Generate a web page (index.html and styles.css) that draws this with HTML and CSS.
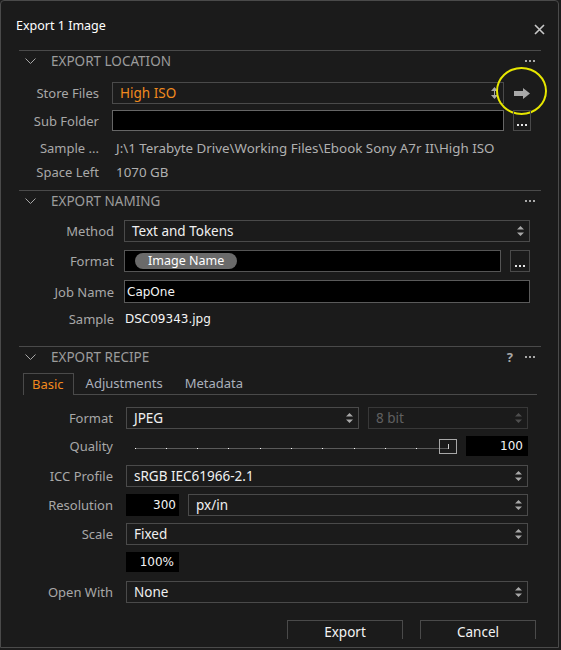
FILE: index.html
```html
<!DOCTYPE html>
<html>
<head>
<meta charset="utf-8">
<link rel="stylesheet" href="styles.css">
</head>
<body>
<div class="window">
  <div class="titlebar">
    <span class="title">Export 1 Image</span>
    <svg class="close" width="11" height="11" viewBox="0 0 11 11"><path d="M1 1L10 10M10 1L1 10"/></svg>
  </div>

  <section class="section sec-loc">
    <div class="sec-head">
      <svg class="chev" width="11" height="6" viewBox="0 0 11 6"><polyline points="0.5,0.5 5.5,5.5 10.5,0.5"/></svg>
      <span class="sec-title">EXPORT LOCATION</span>
      <span class="tools"><svg class="dots" width="10" height="2" viewBox="0 0 10 2"><rect x="0" width="2" height="2"/><rect x="4" width="2" height="2"/><rect x="8" width="2" height="2"/></svg></span>
    </div>
    <div class="row h22 mt11">
      <span class="lbl">Store Files</span>
      <div class="select store"><span class="sel-text orange">High ISO</span>
        <svg class="updown" width="7" height="12" viewBox="0 0 7 12"><path d="M3.5 0L7 4H4V8H7L3.5 12L0 8H3V4H0Z"/></svg>
      </div>
      <div class="side arrow-side">
        <svg class="goarrow" width="16" height="11" viewBox="0 0 16 11"><path d="M0 3H9V0L16 5.5L9 11V8H0Z"/></svg>
        <span class="ring"></span>
      </div>
    </div>
    <div class="row h21 mt6">
      <span class="lbl">Sub Folder</span>
      <div class="input"></div>
      <div class="side"><div class="more"><svg width="10" height="2" viewBox="0 0 10 2"><rect x="0" width="2" height="2"/><rect x="4" width="2" height="2"/><rect x="8" width="2" height="2"/></svg></div></div>
    </div>
    <div class="row h22 mt6">
      <span class="lbl">Sample ...</span>
      <span class="val">J:\1 Terabyte Drive\Working Files\Ebook Sony A7r II\High ISO</span>
    </div>
    <div class="row h22 mt2">
      <span class="lbl">Space Left</span>
      <span class="val">1070 GB</span>
    </div>
  </section>

  <section class="section sec-name">
    <div class="sec-head">
      <svg class="chev" width="11" height="6" viewBox="0 0 11 6"><polyline points="0.5,0.5 5.5,5.5 10.5,0.5"/></svg>
      <span class="sec-title">EXPORT NAMING</span>
      <span class="tools"><svg class="dots" width="10" height="2" viewBox="0 0 10 2"><rect x="0" width="2" height="2"/><rect x="4" width="2" height="2"/><rect x="8" width="2" height="2"/></svg></span>
    </div>
    <div class="row h22 mt9">
      <span class="lbl">Method</span>
      <div class="select"><span class="sel-text">Text and Tokens</span>
        <svg class="updown" width="7" height="12" viewBox="0 0 7 12"><path d="M0 4.5L3.5 1L7 4.5ZM0 7.5L3.5 11L7 7.5Z"/></svg>
      </div>
    </div>
    <div class="row h22 mt8">
      <span class="lbl">Format</span>
      <div class="input tokens"><span class="chip">Image Name</span></div>
      <div class="side2"><div class="more"><svg width="10" height="2" viewBox="0 0 10 2"><rect x="0" width="2" height="2"/><rect x="4" width="2" height="2"/><rect x="8" width="2" height="2"/></svg></div></div>
    </div>
    <div class="row h23 mt8">
      <span class="lbl">Job Name</span>
      <div class="input job"><span class="mono">CapOne</span></div>
    </div>
    <div class="row h22 mt5">
      <span class="lbl">Sample</span>
      <span class="mono sample">DSC09343.jpg</span>
    </div>
  </section>

  <section class="section sec-recipe">
    <div class="sec-head">
      <svg class="chev" width="11" height="6" viewBox="0 0 11 6"><polyline points="0.5,0.5 5.5,5.5 10.5,0.5"/></svg>
      <span class="sec-title">EXPORT RECIPE</span>
      <span class="tools"><span class="help">?</span><svg class="dots" width="10" height="2" viewBox="0 0 10 2"><rect x="0" width="2" height="2"/><rect x="4" width="2" height="2"/><rect x="8" width="2" height="2"/></svg></span>
    </div>
    <div class="tabs mt6">
      <span class="tab active">Basic</span>
      <span class="tab t-adj">Adjustments</span>
      <span class="tab t-meta">Metadata</span>
      <span class="tab-fill"></span>
    </div>
    <div class="row h22 mt12">
      <span class="lbl">Format</span>
      <div class="select"><span class="sel-text">JPEG</span>
        <svg class="updown" width="7" height="12" viewBox="0 0 7 12"><path d="M0 4.5L3.5 1L7 4.5ZM0 7.5L3.5 11L7 7.5Z"/></svg>
      </div>
      <div class="select disabled bits"><span class="sel-text">8 bit</span>
        <svg class="updown" width="7" height="12" viewBox="0 0 7 12"><path d="M0 4.5L3.5 1L7 4.5ZM0 7.5L3.5 11L7 7.5Z"/></svg>
      </div>
    </div>
    <div class="row h20 mt7">
      <span class="lbl">Quality</span>
      <svg class="slider" width="331" height="20" viewBox="0 0 331 20">
        <line class="track" x1="9" y1="12.5" x2="322" y2="12.5"/>
        <g class="ticks">
          <rect x="9" y="12" width="1" height="1"/><rect x="40" y="12" width="1" height="1"/><rect x="71" y="12" width="1" height="1"/><rect x="102" y="12" width="1" height="1"/><rect x="134" y="12" width="1" height="1"/><rect x="165" y="12" width="1" height="1"/><rect x="196" y="12" width="1" height="1"/><rect x="228" y="12" width="1" height="1"/><rect x="259" y="12" width="1" height="1"/><rect x="290" y="12" width="1" height="1"/>
        </g>
        <rect class="thumb" x="313.5" y="3.5" width="17" height="14"/>
        <line class="thumb-tick" x1="322.5" y1="8" x2="322.5" y2="13"/>
      </svg>
      <div class="num qual">100</div>
    </div>
    <div class="row h22 mt9">
      <span class="lbl">ICC Profile</span>
      <div class="select"><span class="sel-text">sRGB IEC61966-2.1</span>
        <svg class="updown" width="7" height="12" viewBox="0 0 7 12"><path d="M0 4.5L3.5 1L7 4.5ZM0 7.5L3.5 11L7 7.5Z"/></svg>
      </div>
    </div>
    <div class="row h22 mt7">
      <span class="lbl">Resolution</span>
      <div class="num small">300</div>
      <div class="select res"><span class="sel-text">px/in</span>
        <svg class="updown" width="7" height="12" viewBox="0 0 7 12"><path d="M0 4.5L3.5 1L7 4.5ZM0 7.5L3.5 11L7 7.5Z"/></svg>
      </div>
    </div>
    <div class="row h22 mt7">
      <span class="lbl">Scale</span>
      <div class="select"><span class="sel-text">Fixed</span>
        <svg class="updown" width="7" height="12" viewBox="0 0 7 12"><path d="M0 4.5L3.5 1L7 4.5ZM0 7.5L3.5 11L7 7.5Z"/></svg>
      </div>
    </div>
    <div class="row h20 mt7">
      <span class="lbl"></span>
      <div class="num small pct">100%</div>
    </div>
    <div class="row h22 mt9">
      <span class="lbl">Open With</span>
      <div class="select"><span class="sel-text">None</span>
        <svg class="updown" width="7" height="12" viewBox="0 0 7 12"><path d="M0 4.5L3.5 1L7 4.5ZM0 7.5L3.5 11L7 7.5Z"/></svg>
      </div>
    </div>
    <div class="buttons">
      <div class="btn">Export</div>
      <div class="btn">Cancel</div>
    </div>
  </section>
</div>
</body>
</html>
```

FILE: styles.css
```css
html, body {
  margin: 0;
  padding: 0;
  background: #1c1c1c;
}
body {
  width: 561px;
  height: 650px;
  overflow: hidden;
  font-family: "Noto Sans", "Open Sans", sans-serif;
  font-size: 13px;
  color: #a8a8a8;
}
.window {
  width: 559px;
  height: 648px;
  box-sizing: border-box;
  border: 1px solid #4a4a4a;
  border-radius: 4px 4px 0 0;
  background: #1b1b1b;
  overflow: hidden;
}
.titlebar {
  height: 49px;
  display: flex;
  align-items: center;
  padding: 0 13px 0 15px;
}
.title {
  flex: 1;
  color: #ffffff;
  font-size: 12.5px;
  margin-top: -1px;
}
.close {
  fill: none;
  stroke: #c8c8c8;
  stroke-width: 1.6;
  margin-top: 7px;
}
.section {
  margin: 0 17px 0 18px;
  border-top: 1px solid #4a4a4a;
}
.sec-loc { --lw: 80px; --lg: 13px; --rm: 10px; padding-bottom: 7px; }
.sec-name { --lw: 95px; --lg: 10px; --rm: 11px; padding-bottom: 16px; }
.sec-recipe { --lw: 94px; --lg: 13px; --rm: 13px; }

.sec-head {
  height: 20px;
  display: flex;
  align-items: center;
}
.chev {
  fill: none;
  stroke: #a8a8a8;
  stroke-width: 1;
  margin-left: 6px;
}
.sec-title {
  margin-left: 15px;
  color: #9c9c9c;
  font-size: 13.5px;
  flex: 1;
}
.tools {
  display: flex;
  align-items: center;
  margin-right: 6px;
  gap: 12px;
}
.dots { fill: #a8a8a8; }
.help {
  color: #a8a8a8;
  font-weight: bold;
  font-size: 13px;
}

.row {
  display: flex;
  align-items: center;
  margin-right: var(--rm);
}
.h20 { height: 20px; }
.h21 { height: 21px; }
.h22 { height: 22px; }
.h23 { height: 23px; }
.mt2 { margin-top: 2px; }
.mt5 { margin-top: 5px; }
.mt6 { margin-top: 6px; }
.mt7 { margin-top: 7px; }
.mt8 { margin-top: 8px; }
.mt9 { margin-top: 9px; }
.mt11 { margin-top: 11px; }
.mt12 { margin-top: 12px; }

.lbl {
  flex: none;
  width: var(--lw);
  margin-right: var(--lg);
  text-align: right;
  color: #a8a8a8;
  white-space: nowrap;
}
.val {
  padding-left: 4px;
  color: #b0b0b0;
  white-space: nowrap;
  font-size: 13.35px;
}

.select {
  flex: 1;
  height: 100%;
  box-sizing: border-box;
  border: 1px solid #4a4a4a;
  display: flex;
  align-items: center;
  padding: 0 5px 0 7px;
  color: #f0f0f0;
  font-size: 13.5px;
  min-width: 0;
}
.sel-text { flex: 1; white-space: nowrap; }
.orange { color: #f28a1e; }
.updown { fill: #a8a8a8; flex: none; }
.select.store { margin-right: 7px; }
.select.disabled {
  color: #606060;
  border-color: #383838;
}
.select.disabled .updown { fill: #4e4e4e; }
.bits { flex: none; width: 160px; margin-left: 9px; }
.res { margin-left: 9px; }

.input {
  flex: 1;
  height: 100%;
  box-sizing: border-box;
  border: 1px solid #666666;
  background: #000000;
  display: flex;
  align-items: center;
}
.input.tokens { border-color: #555555; padding-left: 10px; }
.input.job { border-color: #5a5a5a; padding-left: 2px; }
.chip {
  background: #6a6a6a;
  color: #ffffff;
  border-radius: 8px;
  height: 16px;
  line-height: 16px;
  padding: 0 13px;
  font-size: 12.5px;
}
.mono {
  font-family: "DejaVu Sans", sans-serif;
  font-size: 12px;
  color: #f4f4f4;
}
.sample { padding-left: 1px; }

.side {
  flex: none;
  width: 18px;
  height: 100%;
  margin-left: 9px;
  display: flex;
  align-items: center;
  justify-content: center;
  position: relative;
}
.arrow-side { margin-left: 2px; width: 18px; }
.side2 {
  flex: none;
  width: 20px;
  height: 100%;
  margin-left: 9px;
}
.more {
  width: 100%;
  height: 100%;
  box-sizing: border-box;
  border: 1px solid #4a4a4a;
  display: flex;
  align-items: flex-end;
  justify-content: center;
  padding-bottom: 4px;
  fill: #e6e6e6;
}
.goarrow { fill: #a8a8a8; }
.ring {
  position: absolute;
  left: -17px;
  top: -15px;
  width: 51px;
  height: 48px;
  box-sizing: border-box;
  border: 2px solid #e6e600;
  border-radius: 50%;
}

.tabs {
  display: flex;
  height: 22px;
  margin-left: 4px;
  margin-right: 4px;
}
.tab {
  box-sizing: border-box;
  height: 22px;
  line-height: 21px;
  color: #aab0bb;
  border-bottom: 1px solid #4a4a4a;
  white-space: nowrap;
}
.tab.active {
  color: #f28a1e;
  border: 1px solid #4a4a4a;
  border-bottom: none;
  padding: 0 9px 0 8px;
}
.t-adj { padding: 0 11px 0 12px; }
.t-meta { padding: 0 0 0 11px; }
.tab-fill { flex: 1; border-bottom: 1px solid #4a4a4a; }

.slider { flex: none; }
.track { stroke: #5a5a5a; stroke-width: 1; }
.ticks { fill: #ffffff; }
.thumb { fill: none; stroke: #a8a8a8; stroke-width: 1; }
.thumb-tick { stroke: #d0d0d0; stroke-width: 1; }

.num {
  height: 100%;
  box-sizing: border-box;
  background: #000000;
  color: #f4f4f4;
  font-family: "DejaVu Sans", sans-serif;
  font-size: 12px;
  display: flex;
  align-items: center;
  justify-content: flex-end;
}
.num.qual { flex: none; width: 62px; margin-left: 9px; padding-right: 5px; }
.num.small { flex: none; width: 53px; padding-right: 3px; }
.num.pct { padding-right: 5px; }

.buttons {
  display: flex;
  justify-content: flex-end;
  gap: 17px;
  margin-top: 17px;
  margin-right: 5px;
}
.btn {
  width: 116px;
  height: 19px;
  box-sizing: border-box;
  border: 1px solid #4a4a4a;
  border-bottom: none;
  text-align: center;
  line-height: 22px;
  color: #f4f4f4;
  font-size: 13.5px;
}
```
